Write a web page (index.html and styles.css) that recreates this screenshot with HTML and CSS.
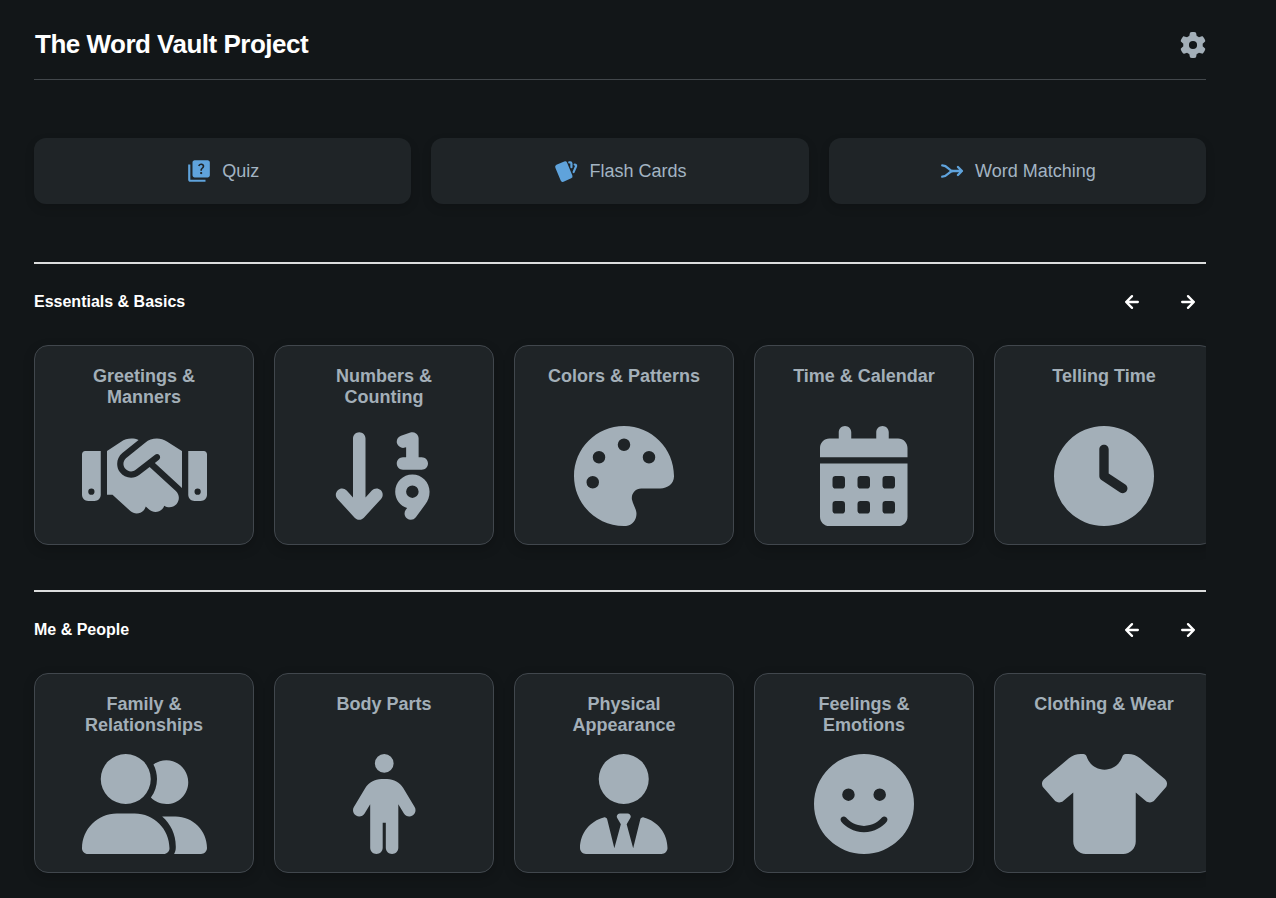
FILE: index.html
```html
<!DOCTYPE html>
<html lang="en">
<head>
<meta charset="utf-8">
<title>The Word Vault Project</title>
<link rel="stylesheet" href="styles.css">
</head>
<body>
<svg class="sprite" aria-hidden="true">
  <symbol id="arrow-left" viewBox="0 0 24 24"><path d="M19 12H5M12 5l-7 7 7 7" fill="none" stroke="currentColor" stroke-width="2.8" stroke-linecap="round" stroke-linejoin="round"/></symbol>
  <symbol id="arrow-right" viewBox="0 0 24 24"><path d="M5 12h14M12 5l7 7-7 7" fill="none" stroke="currentColor" stroke-width="2.8" stroke-linecap="round" stroke-linejoin="round"/></symbol>
</svg>
<div class="app">
  <header class="header">
    <h1 class="title">The Word Vault Project</h1>
    <svg class="gear" viewBox="0 0 512 512"><path d="M495.9 166.6c3.2 8.700 .5 18.400-6.400 24.600l-43.300 39.400c1.100 8.300 1.700 16.800 1.700 25.400s-.6 17.100-1.700 25.400l43.300 39.400c6.900 6.200 9.600 15.900 6.400 24.600c-4.400 11.900-9.700 23.300-15.800 34.300l-4.700 8.100c-6.600 11-14 21.400-22.100 31.200c-5.900 7.200-15.700 9.600-24.500 6.800l-55.700-17.700c-13.400 10.300-28.200 18.900-44 25.400l-12.500 57.100c-2 9.100-9 16.300-18.200 17.800c-13.800 2.300-28 3.500-42.500 3.500s-28.700-1.200-42.500-3.500c-9.200-1.500-16.200-8.700-18.200-17.800l-12.500-57.100c-15.800-6.500-30.600-15.100-44-25.400L83.100 425.900c-8.800 2.800-18.600 .3-24.500-6.800c-8.100-9.800-15.500-20.200-22.100-31.200l-4.700-8.100c-6.100-11-11.400-22.400-15.800-34.300c-3.200-8.700-.5-18.400 6.400-24.600l43.300-39.400C64.600 273.100 64 264.600 64 256s.6-17.100 1.700-25.400L22.400 191.200c-6.900-6.200-9.600-15.900-6.400-24.600c4.400-11.900 9.700-23.300 15.800-34.300l4.700-8.100c6.600-11 14-21.400 22.100-31.200c5.900-7.200 15.700-9.600 24.500-6.800l55.700 17.700c13.400-10.300 28.200-18.900 44-25.400l12.500-57.100c2-9.100 9-16.300 18.200-17.800C227.300 1.200 241.500 0 256 0s28.700 1.200 42.500 3.500c9.200 1.500 16.200 8.700 18.200 17.800l12.500 57.100c15.800 6.500 30.600 15.100 44 25.400l55.700-17.700c8.800-2.800 18.600-.3 24.500 6.800c8.100 9.800 15.500 20.200 22.100 31.200l4.700 8.100c6.100 11 11.400 22.400 15.800 34.300zM256 336a80 80 0 1 0 0-160 80 80 0 1 0 0 160z"/></svg>
  </header>

  <nav class="modes">
    <a class="mode"><svg class="mode-icon" viewBox="0 0 24 24"><path d="M4 6H2v14c0 1.100.9 2 2 2h14v-2H4V6zM20 2H8c-1.100 0-2 .9-2 2v12c0 1.100.9 2 2 2h12c1.100 0 2-.9 2-2V4c0-1.100-.9-2-2-2zm-5.990 13c-.59 0-1.050-.47-1.050-1.050 0-.59.47-1.040 1.050-1.040.59 0 1.040.45 1.040 1.040-.01.58-.45 1.050-1.040 1.050zm2.500-6.170c-.63.93-1.230 1.210-1.560 1.810-.13.24-.18.4-.18 1.180h-1.520c0-.41-.06-1.080.26-1.650.41-.73 1.180-1.160 1.630-1.800.48-.68.21-1.940-1.140-1.940-.88 0-1.320.67-1.500 1.230l-1.370-.57C11.510 5.960 12.520 5 13.990 5c1.230 0 2.080.56 2.510 1.260.37.61.58 1.730.01 2.570z"/></svg>Quiz</a>
    <a class="mode"><svg class="mode-icon" viewBox="0 0 24 24"><path d="M10.348 3.169l-7.150 3.113a2 2 0 0 0-1.030 2.608l4.920 11.895a1.960 1.960 0 0 0 2.590 1.063l7.142-3.110a2.002 2.002 0 0 0 1.036-2.611l-4.920-11.894a1.960 1.960 0 0 0-2.588-1.064z"/><path d="M16 3a2 2 0 0 1 1.995 1.850l.005 .15v3.500a1 1 0 0 1-1.993 .117l-.007-.117v-3.500h-1a1 1 0 0 1-.117-1.993l.117-.007h1z"/><path d="M19.080 5.610a1 1 0 0 1 1.310-.53c.257 .108 .505 .21 .769 .314a2 2 0 0 1 1.114 2.479l-.056 .146l-2.298 5.374a1 1 0 0 1-1.878-.676l.04-.11l2.296-5.371l-.366-.148l-.402-.167a1 1 0 0 1-.53-1.312z"/></svg>Flash Cards</a>
    <a class="mode"><svg class="mode-icon" viewBox="0 0 24 24"><path class="line" d="M3 6.800c5.500 0 5.800 5.200 10 5.200h8M3 17.200c5.500 0 5.800-5.200 10-5.200M17.500 8.300 21.200 12l-3.700 3.700"/></svg>Word Matching</a>
  </nav>

  <section class="section">
    <div class="section-head">
      <h2 class="section-title">Essentials &amp; Basics</h2>
      <div class="pager"><svg class="arrow"><use href="#arrow-left"/></svg><svg class="arrow"><use href="#arrow-right"/></svg></div>
    </div>
    <div class="cards">
      <article class="card"><h3 class="card-title">Greetings &amp; Manners</h3><svg class="card-icon" viewBox="0 0 640 512"><path d="M323.400 85.200l-96.800 78.400c-16.100 13-19.200 36.400-7 53.100c12.900 17.800 38 21.300 55.300 7.800l99.300-77.200c7-5.400 17-4.200 22.500 2.800s4.200 17-2.800 22.500l-20.900 16.200L512 316.800 512 128l-.7 0-3.900-2.500L434.800 79c-15.300-9.800-33.200-15-51.400-15c-21.800 0-43 7.500-60 21.200zm22.800 124.400l-51.700 40.200C263 274.300 217.300 268 193.700 235.600c-22.200-30.500-16.600-73.100 12.700-96.800l83.200-67.300c-11.600-4.900-24.100-7.400-36.800-7.400C234 64 215.700 69.600 200 80l-72 48 0 224 28.200 0 91.400 83.400c19.600 17.900 49.900 16.500 67.800-3.100c5.500-6.100 9.200-13.200 11.100-20.600l17 15.600c19.500 17.900 49.900 16.600 67.800-2.900c4.500-4.900 7.800-10.600 9.900-16.500c19.400 13 45.800 10.300 62.100-7.500c17.900-19.500 16.600-49.900-2.900-67.800l-134.200-123zM16 128c-8.800 0-16 7.200-16 16L0 352c0 17.700 14.300 32 32 32l32 0c17.700 0 32-14.300 32-32l0-224-80 0zM48 320a16 16 0 1 1 0 32 16 16 0 1 1 0-32zM544 128l0 224c0 17.700 14.300 32 32 32l32 0c17.700 0 32-14.300 32-32l0-208c0-8.800-7.200-16-16-16l-80 0zm32 208a16 16 0 1 1 32 0 16 16 0 1 1-32 0z"/></svg></article>
      <article class="card"><h3 class="card-title">Numbers &amp; Counting</h3><svg class="card-icon" viewBox="0 0 576 512"><path d="M450.700 38c8.300 6 13.300 15.700 13.300 26l0 96 16 0c17.700 0 32 14.300 32 32s-14.300 32-32 32l-96 0c-17.700 0-32-14.300-32-32s14.300-32 32-32l16 0 0-51.600-5.900 2c-16.800 5.600-34.900-3.500-40.500-20.200s3.500-34.900 20.200-40.500l48-16c9.800-3.300 20.500-1.600 28.800 4.400zM160 480c-9 0-17.500-3.800-23.600-10.400l-88-96c-11.900-13-11.100-33.300 2-45.200s33.300-11.100 45.200 2L128 365.700 128 64c0-17.700 14.300-32 32-32s32 14.300 32 32l0 301.700 32.400-35.400c11.900-13 32.200-13.900 45.200-2s13.900 32.200 2 45.200l-88 96C177.500 476.200 169 480 160 480z"/><path fill-rule="evenodd" d="M405.100 419.800C369.600 408.300 344 375.200 344 336c0-48.600 39.400-88 88-88s88 39.400 88 88c0 23.500-7.500 46.300-21.500 65.200L449.700 467c-10.500 14.200-30.600 17.200-44.800 6.700s-17.200-30.600-6.700-44.800zM432 304a32 32 0 1 0 0 64 32 32 0 1 0 0-64z"/></svg></article>
      <article class="card"><h3 class="card-title">Colors &amp; Patterns</h3><svg class="card-icon" viewBox="0 0 512 512"><path fill-rule="evenodd" d="M512 256c0 .9 0 1.800 0 2.700c-.4 36.500-33.600 61.300-70.100 61.300L344 320c-26.500 0-48 21.500-48 48c0 3.400 .4 6.700 1 9.900c2.100 10.200 6.500 20 10.800 29.900c6.100 13.800 12.100 27.500 12.100 42c0 31.800-21.600 60.700-53.400 62c-3.500 .1-7 .2-10.600 .2C114.600 512 0 397.400 0 256S114.600 0 256 0S512 114.600 512 256zM128 288a32 32 0 1 0-64 0 32 32 0 1 0 64 0zm0-96a32 32 0 1 0 0-64 32 32 0 1 0 0 64zM288 96a32 32 0 1 0-64 0 32 32 0 1 0 64 0zm96 96a32 32 0 1 0 0-64 32 32 0 1 0 0 64z"/></svg></article>
      <article class="card"><h3 class="card-title">Time &amp; Calendar</h3><svg class="card-icon" viewBox="0 0 448 512"><path fill-rule="evenodd" d="M128 0c17.700 0 32 14.300 32 32l0 32 128 0 0-32c0-17.700 14.300-32 32-32s32 14.300 32 32l0 32 48 0c26.500 0 48 21.500 48 48l0 48L0 160l0-48C0 85.500 21.500 64 48 64l48 0 0-32c0-17.700 14.300-32 32-32zM0 192l448 0 0 272c0 26.500-21.500 48-48 48L48 512c-26.500 0-48-21.500-48-48zM80 256h32a16 16 0 0 1 16 16v32a16 16 0 0 1-16 16H80a16 16 0 0 1-16-16v-32a16 16 0 0 1 16-16zM208 256h32a16 16 0 0 1 16 16v32a16 16 0 0 1-16 16h-32a16 16 0 0 1-16-16v-32a16 16 0 0 1 16-16zM336 256h32a16 16 0 0 1 16 16v32a16 16 0 0 1-16 16h-32a16 16 0 0 1-16-16v-32a16 16 0 0 1 16-16zM80 384h32a16 16 0 0 1 16 16v32a16 16 0 0 1-16 16H80a16 16 0 0 1-16-16v-32a16 16 0 0 1 16-16zM208 384h32a16 16 0 0 1 16 16v32a16 16 0 0 1-16 16h-32a16 16 0 0 1-16-16v-32a16 16 0 0 1 16-16zM336 384h32a16 16 0 0 1 16 16v32a16 16 0 0 1-16 16h-32a16 16 0 0 1-16-16v-32a16 16 0 0 1 16-16z"/></svg></article>
      <article class="card"><h3 class="card-title">Telling Time</h3><svg class="card-icon" viewBox="0 0 512 512"><path fill-rule="evenodd" d="M256 0a256 256 0 1 1 0 512A256 256 0 1 1 256 0zM232 120l0 136c0 8 4 15.500 10.700 20l96 64c11 7.400 25.900 4.400 33.300-6.700s4.400-25.900-6.700-33.300L280 243.200 280 120c0-13.300-10.700-24-24-24s-24 10.700-24 24z"/></svg></article>
    </div>
  </section>

  <section class="section">
    <div class="section-head">
      <h2 class="section-title">Me &amp; People</h2>
      <div class="pager"><svg class="arrow"><use href="#arrow-left"/></svg><svg class="arrow"><use href="#arrow-right"/></svg></div>
    </div>
    <div class="cards">
      <article class="card"><h3 class="card-title">Family &amp; Relationships</h3><svg class="card-icon" viewBox="0 0 640 512"><path d="M96 128a128 128 0 1 1 256 0A128 128 0 1 1 96 128zM0 482.300C0 383.800 79.800 304 178.300 304l91.400 0C368.200 304 448 383.800 448 482.300c0 16.400-13.300 29.700-29.700 29.700L29.700 512C13.300 512 0 498.700 0 482.300zM609.300 512l-137.800 0c5.400-9.400 8.600-20.300 8.600-32l0-8c0-60.700-27.100-115.200-69.800-151.800c2.400-.1 4.700-.2 7.100-.2l61.400 0C567.800 320 640 392.200 640 481.300c0 17-13.800 30.700-30.700 30.700zM432 256c-31 0-59-12.600-79.300-32.900C372.400 196.500 384 163.600 384 128c0-26.800-6.600-52.100-18.300-74.300C384.300 40.100 407.200 32 432 32c61.900 0 112 50.100 112 112s-50.100 112-112 112z"/></svg></article>
      <article class="card"><h3 class="card-title">Body Parts</h3><svg class="card-icon" viewBox="0 0 320 512"><path d="M112 48a48 48 0 1 1 96 0 48 48 0 1 1-96 0zm40 304l0 128c0 17.700-14.300 32-32 32s-32-14.300-32-32l0-223.100L59.400 304.500c-9.100 15.100-28.800 20-43.900 10.900s-20-28.800-10.900-43.900l58.300-97c17.400-28.900 48.600-46.600 82.300-46.600l29.700 0c33.700 0 64.900 17.700 82.300 46.600l58.300 97c9.100 15.100 4.200 34.800-10.900 43.900s-34.800 4.200-43.900-10.900L232 256.900 232 480c0 17.700-14.300 32-32 32s-32-14.300-32-32l0-128-16 0z"/></svg></article>
      <article class="card"><h3 class="card-title">Physical Appearance</h3><svg class="card-icon" viewBox="0 0 448 512"><path d="M96 128a128 128 0 1 0 256 0A128 128 0 1 0 96 128zm94.500 200.200l18.600 31L175.800 483.100l-36-146.900c-2-8.100-9.800-13.400-17.900-11.300C51.900 342.400 0 405.800 0 481.300c0 17 13.800 30.700 30.700 30.700l386.600 0c17 0 30.700-13.800 30.700-30.700c0-75.500-51.900-138.900-121.900-156.400c-8.100-2-15.900 3.300-17.900 11.300l-36 146.900L238.900 359.200l18.600-31c6.400-10.700-1.300-24.200-13.700-24.200L224 304l-19.700 0c-12.400 0-20.100 13.600-13.700 24.200z"/></svg></article>
      <article class="card"><h3 class="card-title">Feelings &amp; Emotions</h3><svg class="card-icon" viewBox="0 0 512 512"><path fill-rule="evenodd" d="M256 512A256 256 0 1 0 256 0a256 256 0 1 0 0 512zM164.100 325.500C182 346.200 212.600 368 256 368s74-21.800 91.900-42.500c5.800-6.700 15.900-7.400 22.600-1.600s7.400 15.900 1.600 22.600C349.800 372.100 311.100 400 256 400s-93.800-27.900-116.100-53.500c-5.800-6.700-5.100-16.800 1.600-22.600s16.800-5.100 22.600 1.600zM144.400 208a32 32 0 1 1 64 0 32 32 0 1 1-64 0zm192-32a32 32 0 1 1 0 64 32 32 0 1 1 0-64z"/></svg></article>
      <article class="card"><h3 class="card-title">Clothing &amp; Wear</h3><svg class="card-icon" viewBox="0 0 640 512"><path d="M211.800 0c7.800 0 14.300 5.700 16.700 13.200C240.800 51.900 277.100 80 320 80s79.200-28.100 91.500-66.800C413.900 5.700 420.400 0 428.200 0l12.600 0c22.500 0 44.200 7.900 61.500 22.300L628.500 127.400c6.600 5.500 10.700 13.500 11.400 22.100s-2.100 17.100-7.800 23.600l-56 64c-11.400 13.100-31.200 14.600-44.600 3.500L480 197.700 480 448c0 35.300-28.700 64-64 64l-192 0c-35.300 0-64-28.700-64-64l0-250.300-51.500 42.900c-13.300 11.100-33.100 9.600-44.600-3.500l-56-64c-5.700-6.500-8.500-15-7.800-23.600s4.800-16.600 11.400-22.100L137.700 22.300C155 7.900 176.700 0 199.200 0l12.600 0z"/></svg></article>
    </div>
  </section>
</div>
</body>
</html>
```
FILE: styles.css
```css
* { box-sizing: border-box; }

html { overflow: hidden; }

body {
  margin: 0;
  background: #121618;
  color: #fff;
  font-family: "Liberation Sans", Arial, sans-serif;
}

.sprite { display: none; }

.app {
  width: 1172px;
  margin-left: 34px;
}

.header {
  display: flex;
  align-items: center;
  justify-content: space-between;
  height: 80px;
  padding: 10px 0 0 1px;
  border-bottom: 1px solid #42474b;
}

.title {
  margin: 0;
  padding-bottom: 2px;
  font-size: 26px;
  line-height: 30px;
  letter-spacing: -0.5px;
}

.gear {
  width: 26px;
  height: 26px;
  fill: #a3afb8;
}

.modes {
  display: grid;
  grid-template-columns: repeat(3, 1fr);
  gap: 20px;
  margin: 58px 0;
}

.mode {
  display: flex;
  align-items: center;
  justify-content: center;
  gap: 10px;
  height: 66px;
  border-radius: 12px;
  background: #1f2427;
  color: #a3b4c3;
  font-size: 18px;
  box-shadow: 0 4px 10px rgba(0, 0, 0, 0.15);
}

.mode-icon {
  width: 26px;
  height: 26px;
  fill: #5fa3dc;
}

.line {
  fill: none;
  stroke: #5fa3dc;
  stroke-width: 2.2;
  stroke-linecap: round;
  stroke-linejoin: round;
}

.section {
  height: 328px;
  border-top: 2px solid #dcdddd;
}

.section-head {
  display: flex;
  align-items: center;
  justify-content: space-between;
  height: 81px;
  padding-right: 8px;
}

.section-title {
  margin: 0;
  padding-bottom: 6px;
  font-size: 16px;
  line-height: 18px;
}

.pager {
  display: flex;
  gap: 36px;
  padding-bottom: 5px;
}

.arrow {
  width: 20px;
  height: 20px;
}

.cards {
  display: flex;
  gap: 20px;
  overflow: hidden;
  margin: -15px 0 -20px -20px;
  padding: 15px 0 20px 20px;
}

.card {
  display: flex;
  flex: 0 0 220px;
  flex-direction: column;
  align-items: center;
  justify-content: space-between;
  height: 200px;
  padding: 20px 18px 18px;
  border: 1px solid #41474d;
  border-radius: 14px;
  background: #1f2427;
  box-shadow: 0 4px 12px rgba(0, 0, 0, 0.2);
}

.card-title {
  margin: 0;
  width: 160px;
  color: #a3afb8;
  font-size: 18px;
  line-height: 21px;
  text-align: center;
}

.card-icon {
  height: 100px;
  overflow: visible;
  fill: #a3afb8;
}
```
